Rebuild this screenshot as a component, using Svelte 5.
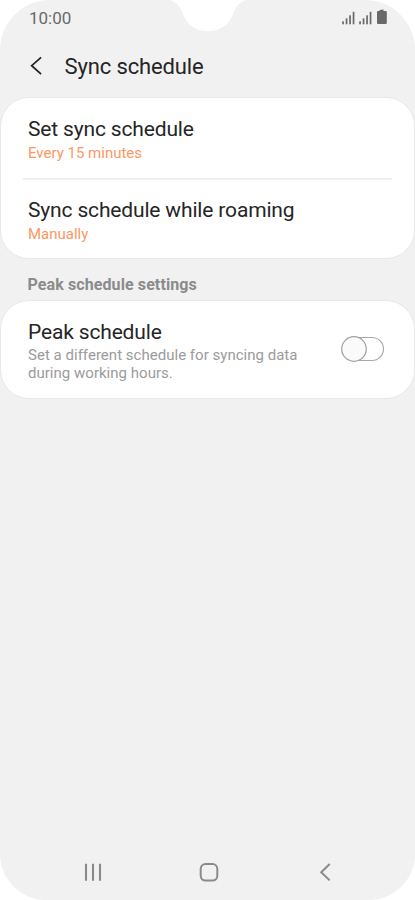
<script>
  const syncRows = [
    { title: 'Set sync schedule', value: 'Every 15 minutes' },
    { title: 'Sync schedule while roaming', value: 'Manually' }
  ];
  const bars = [3, 6, 9, 12.5];
</script>

{#snippet signal()}
  <svg class="signal" width="13" height="14" viewBox="0 0 13 14" aria-hidden="true">
    {#each bars as h, i}
      <rect x={0.2 + i * 3.5} y={13.3 - h} width="1.7" height={h} fill="#696969" />
    {/each}
  </svg>
{/snippet}

<div class="phone">
  <svg class="notch" width="80" height="31" viewBox="0 0 80 31" aria-hidden="true">
    <path d="M0 0C8 1 12 6 14.500 13C19 25 27 31 40 31S61 25 65.500 13C68 6 72 1 80 0Z" fill="#fff" />
  </svg>

  <div class="status">
    <span class="time">10:00</span>
    <div class="icons">
      {@render signal()}
      {@render signal()}
      <svg class="battery" width="12" height="16" viewBox="0 0 12 16" aria-hidden="true">
        <path d="M2 2H3.500V1L7.500 .5V2H9.800Q10.800 2 10.800 3V14Q10.800 15 9.800 15H2Q1 15 1 14V3Q1 2 2 2Z" fill="#696969" />
      </svg>
    </div>
  </div>

  <header>
    <svg width="14" height="20" viewBox="0 0 14 20" aria-hidden="true">
      <path d="M12.100 1.300L2.700 9.700L12.100 18.100" fill="none" stroke="#252525" stroke-width="1.800" />
    </svg>
    <h1>Sync schedule</h1>
  </header>

  <section class="card sync">
    {#each syncRows as row}
      <div class="row">
        <h2>{row.title}</h2>
        <p class="value">{row.value}</p>
      </div>
    {/each}
  </section>

  <h3>Peak schedule settings</h3>

  <section class="card peak">
    <div>
      <h2>Peak schedule</h2>
      <p class="desc">Set a different schedule for syncing data<br />during working hours.</p>
    </div>
    <svg class="switch" width="45" height="28" viewBox="0 0 45 28" aria-hidden="true">
      <rect x="3" y="2.500" width="40.500" height="23" rx="11.500" fill="#fff" stroke="#a9a9a9" stroke-width="1.200" />
      <circle cx="14" cy="14" r="12.300" fill="#fafafa" stroke="#a0a0a0" stroke-width="1.200" />
    </svg>
  </section>

  <nav>
    <svg width="20" height="20" viewBox="0 0 20 20" aria-hidden="true">
      <path d="M3 1.700V18.700M10 1.700V18.700M17 1.700V18.700" stroke="#8a8a8a" stroke-width="2.100" />
    </svg>
    <svg width="20" height="20" viewBox="0 0 20 20" aria-hidden="true">
      <rect x="1.700" y="2" width="16.600" height="16.600" rx="4.800" fill="none" stroke="#8a8a8a" stroke-width="2" />
    </svg>
    <svg width="20" height="20" viewBox="0 0 20 20" aria-hidden="true">
      <path d="M14.700 2L6.200 10.200L14.700 18.400" fill="none" stroke="#8a8a8a" stroke-width="2" />
    </svg>
  </nav>
</div>

<style>
  :global(body) {
    margin: 0;
    background: #fff;
  }
  .phone {
    position: relative;
    display: flex;
    flex-direction: column;
    width: 415px;
    height: 900px;
    overflow: hidden;
    border-radius: 50px 50px 46px 46px;
    background: #f1f1f1;
    font-family: Roboto, sans-serif;
    color: #252525;
  }
  .notch {
    position: absolute;
    left: 168px;
    top: 0;
  }
  h1, h2, h3, p {
    margin: 0;
    font-weight: 400;
    white-space: nowrap;
  }
  .status {
    display: flex;
    justify-content: space-between;
    height: 36px;
    box-sizing: border-box;
    padding: 8px 27px 0 29px;
  }
  .time {
    font-size: 17px;
    line-height: 20px;
    color: #696969;
  }
  .icons {
    display: flex;
    align-items: flex-start;
    gap: 4px;
    padding-top: 1px;
  }
  .signal {
    margin-top: 2px;
  }
  header {
    display: flex;
    align-items: center;
    gap: 21.5px;
    height: 61px;
    box-sizing: border-box;
    padding: 0 29px 2px;
  }
  h1 {
    font-size: 22px;
    line-height: 26px;
    padding-top: 2px;
    letter-spacing: -0.13px;
  }
  .card {
    box-sizing: border-box;
    border: 1px solid #e8e8e8;
    border-radius: 29px;
    background: #fff;
  }
  .sync {
    height: 162px;
    padding: 0 22px;
  }
  .row {
    height: 79px;
    padding: 18px 5px 0;
    box-sizing: border-box;
  }
  .row + .row {
    height: 81px;
    padding-top: 17px;
    border-top: 2px solid #f0f0f0;
    margin-top: 1px;
  }
  h2 {
    font-size: 21px;
    line-height: 26px;
    letter-spacing: -0.16px;
  }
  .value {
    font-size: 15px;
    line-height: 18px;
    margin-top: 2px;
    color: #fc9765;
  }
  h3 {
    height: 41px;
    box-sizing: border-box;
    padding: 16px 27.5px 0;
    font-size: 16px;
    line-height: 20px;
    font-weight: 700;
    letter-spacing: 0.1px;
    color: #8b8b8b;
  }
  .peak {
    display: flex;
    justify-content: space-between;
    height: 99px;
    padding: 18px 29px 0 27px;
  }
  .desc {
    font-size: 15px;
    line-height: 18px;
    margin-top: 1px;
    letter-spacing: 0.02px;
    color: #9b9b9b;
  }
  .switch {
    margin-top: 16px;
  }
  nav {
    display: flex;
    justify-content: space-between;
    margin-top: auto;
    padding: 0 80px 18px 83px;
  }
</style>
